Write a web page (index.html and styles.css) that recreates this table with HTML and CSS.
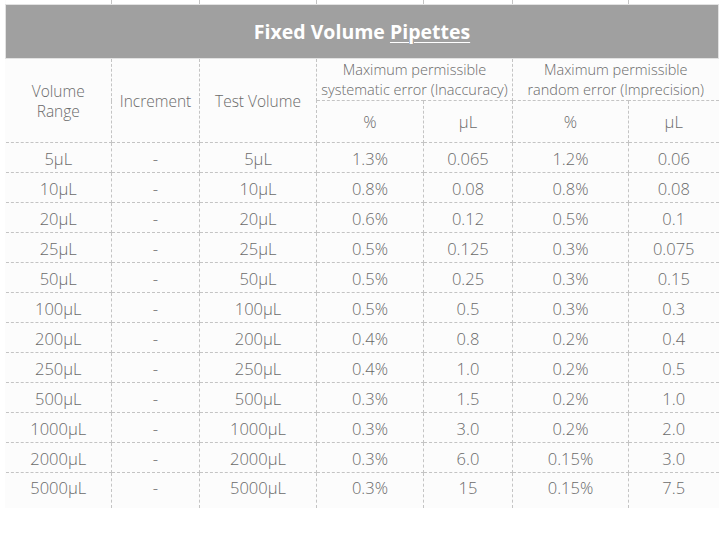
FILE: index.html
```html
<!DOCTYPE html>
<html>
<head>
<meta charset="utf-8">
<link rel="stylesheet" href="styles.css">
</head>
<body>
<div class="wrap">
<table class="spec">
<colgroup>
<col class="c1"><col class="c2"><col class="c3"><col class="c4"><col class="c5"><col class="c6"><col class="c7">
</colgroup>
<tr class="stub"><td></td><td></td><td></td><td></td><td></td><td></td><td></td></tr>
<tr class="title"><th colspan="7">Fixed Volume <u>Pipettes</u></th></tr>
<tr class="h1">
<th rowspan="2">Volume<br>Range</th>
<th rowspan="2">Increment</th>
<th rowspan="2">Test Volume</th>
<th colspan="2" class="grp">Maximum permissible<br>systematic error (Inaccuracy)</th>
<th colspan="2" class="grp">Maximum permissible<br>random error (Imprecision)</th>
</tr>
<tr class="h2"><th>%</th><th>µL</th><th>%</th><th>µL</th></tr>
<tr><td>5µL</td><td>-</td><td>5µL</td><td>1.3%</td><td>0.065</td><td>1.2%</td><td>0.06</td></tr>
<tr><td>10µL</td><td>-</td><td>10µL</td><td>0.8%</td><td>0.08</td><td>0.8%</td><td>0.08</td></tr>
<tr><td>20µL</td><td>-</td><td>20µL</td><td>0.6%</td><td>0.12</td><td>0.5%</td><td>0.1</td></tr>
<tr><td>25µL</td><td>-</td><td>25µL</td><td>0.5%</td><td>0.125</td><td>0.3%</td><td>0.075</td></tr>
<tr><td>50µL</td><td>-</td><td>50µL</td><td>0.5%</td><td>0.25</td><td>0.3%</td><td>0.15</td></tr>
<tr><td>100µL</td><td>-</td><td>100µL</td><td>0.5%</td><td>0.5</td><td>0.3%</td><td>0.3</td></tr>
<tr><td>200µL</td><td>-</td><td>200µL</td><td>0.4%</td><td>0.8</td><td>0.2%</td><td>0.4</td></tr>
<tr><td>250µL</td><td>-</td><td>250µL</td><td>0.4%</td><td>1.0</td><td>0.2%</td><td>0.5</td></tr>
<tr><td>500µL</td><td>-</td><td>500µL</td><td>0.3%</td><td>1.5</td><td>0.2%</td><td>1.0</td></tr>
<tr><td>1000µL</td><td>-</td><td>1000µL</td><td>0.3%</td><td>3.0</td><td>0.2%</td><td>2.0</td></tr>
<tr><td>2000µL</td><td>-</td><td>2000µL</td><td>0.3%</td><td>6.0</td><td>0.15%</td><td>3.0</td></tr>
<tr class="last"><td>5000µL</td><td>-</td><td>5000µL</td><td>0.3%</td><td>15</td><td>0.15%</td><td>7.5</td></tr>
</table>
</div>
</body>
</html>
```
FILE: styles.css
```css
html, body {
  margin: 0;
  padding: 0;
  background: #ffffff;
}
.wrap {
  padding: 0 0 0 5px;
}
.spec {
  border-collapse: collapse;
  table-layout: fixed;
  width: 713px;
  font-family: "Open Sans", "Liberation Sans", sans-serif;
  color: #6a6a6a;
  font-size: 16.5px;
  font-weight: 350;
  background: #fcfcfc;
}
.c1 { width: 106px; }
.c2 { width: 88px; }
.c3 { width: 117px; }
.c4 { width: 107px; }
.c5 { width: 89px; }
.c6 { width: 116px; }
.c7 { width: 90px; }
.spec td, .spec th {
  padding: 0;
  text-align: center;
  font-weight: 350;
  border-right: 1px dashed #c4c4c4;
  border-bottom: 1px dashed #c4c4c4;
  height: 29px;
  line-height: 20px;
}
.spec td {
  padding-top: 2px;
  height: 27px;
}
.spec td:last-child, .spec th:last-child {
  border-right: none;
}
.spec tr.stub td {
  height: 4px;
  padding: 0;
  border-bottom: none;
  background: #ffffff;
}
.spec tr.title th {
  height: 53px;
  background: #a0a0a0;
  color: #ffffff;
  font-weight: 700;
  font-size: 19.5px;
  border: 1px solid #e2e2e2;
}
.spec tr.title u {
  text-decoration-thickness: 1px;
  text-underline-offset: 3px;
}
.spec tr.h1 th {
  height: 41px;
  font-size: 15.5px;
}
.spec tr.h1 th.grp {
  font-size: 14.5px;
}
.spec tr.h2 th {
  height: 41px;
  font-size: 16.5px;
}
.spec tr.last td {
  border-bottom: none;
  height: 35px;
  vertical-align: top;
  line-height: 29px;
  padding-top: 0;
}
```
